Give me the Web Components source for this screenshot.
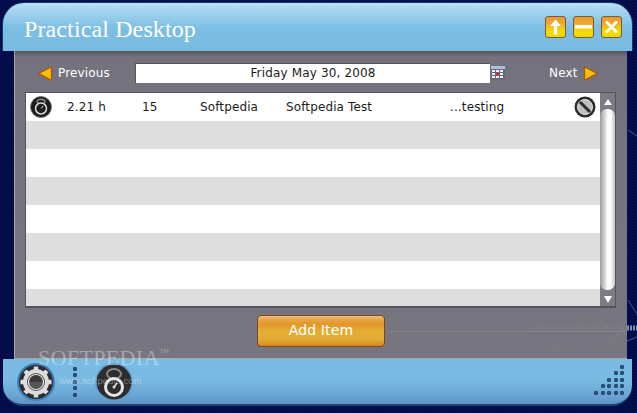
<!DOCTYPE html>
<html>
<head>
<meta charset="utf-8">
<title>Practical Desktop</title>
<style>
  html, body { margin: 0; height: 100%; background: #03093c; overflow: hidden; }
</style>
</head>
<body>
<pd-app></pd-app>

<script>
(function (customElements) {
  const UI_FONT = `"DejaVu Sans", sans-serif`;

  // helper, every element below does the same thing with its template
  const define = (name, html) => {
    customElements.define(name, class extends HTMLElement {
      connectedCallback() {
        if (this.shadowRoot) return;
        this.attachShadow({ mode: 'open' }).innerHTML = html;
      }
    });
  };

  define('pd-win-button', `
    <style>
      :host { display: block; width: 21px; height: 22px; box-sizing: border-box; border: 1px solid #80583a; border-radius: 3px;
        background: linear-gradient(#e79a34 0%, #eca82c 30%, #f2c810 55%, #f2dc00 75%, #efd600 100%); }
      svg { display: block; width: 19px; height: 20px; }
    </style>
    <slot></slot>`);

  define('pd-header', `
    <style>
      :host { display: flex; align-items: center; height: 48px; box-sizing: border-box; padding: 0 10px 0 21px;
        border-radius: 21px 21px 0 0; box-shadow: 0 -1px 0 #0f3a78, -1px 0 0 #0f3a78, 1px 0 0 #0f3a78;
        background: linear-gradient(#b9e0f5 0, #a4d4ee 8px, #7dbee4 25px, #79bae1 100%); }
      h1 { flex: 1; margin: 5px 0 0; font: 400 24px "Liberation Serif", serif; letter-spacing: .12px; color: #fff; }
      .btns { display: flex; gap: 7px; margin-top: -1px; }
    </style>
    <h1>Practical Desktop</h1>
    <div class="btns"><slot></slot></div>`);

  define('pd-nav', `
    <style>
      :host { display: flex; align-items: center; height: 20px; font: 12px ${UI_FONT}; letter-spacing: .15px; color: #fff; }
      .prev, .next { display: flex; align-items: center; gap: 6px; }
      .prev { width: 110px; padding-left: 13px; box-sizing: border-box; flex: none; }
      .date { width: 355px; height: 20px; box-sizing: border-box; background: #fff; border: 1px solid #55545c; border-width: 1px 0 0 1px;
        color: #1c1c1c; text-align: center; line-height: 18px; flex: none; }
      .cal { margin: 0 0 0 1px; flex: none; }
      .next { margin-left: 44px; }
      svg { display: block; }
    </style>
    <div class="prev">
      <svg width="14" height="15" viewBox="0 0 14 15"><path d="M.8 7.500 13.500.8v13.400z" fill="#f4c200" stroke="#b5500c" stroke-width="1.300"/></svg>
      <span>Previous</span>
    </div>
    <div class="date">Friday May 30, 2008</div>
    <svg class="cal" width="14" height="14" viewBox="0 0 14 14">
      <rect width="14" height="14" fill="#656b78"/>
      <rect width="14" height="3" fill="#a9c2da"/>
      <path d="M1 4h3v2H1zM5 4h3v2H5zM9 4h3v2H9zM1 7h3v2H1zM9 7h3v2H9zM1 10h3v2H1zM5 10h3v2H5zM9 10h3v2H9z" fill="#f2f2f2"/>
      <rect x="5" y="7" width="3" height="2" fill="#f01818"/>
    </svg>
    <div class="next">
      <span>Next</span>
      <svg width="14" height="15" viewBox="0 0 14 15"><path d="M13.200 7.500 .5.8v13.400z" fill="#f4c200" stroke="#b5500c" stroke-width="1.300"/></svg>
    </div>`);

  define('pd-row', `
    <style>
      :host { display: grid; grid-template-columns: 41px 75px 58px 86px 164px 124px 1fr; align-items: center; height: 28px;
        font: 12px ${UI_FONT}; letter-spacing: .12px; color: #1c1c1c; background: #fff; }
      :host(:nth-child(even)) { background: #dedede; }
      ::slotted(*) { white-space: nowrap; }
    </style>
    <slot></slot>`);

  define('pd-scrollbar', `
    <style>
      :host { display: flex; flex-direction: column; align-items: center; width: 15px; flex: none; background: #7c7b84; }
      .arrow { width: 0; height: 0; border: 4px solid transparent; flex: none; }
      .up { border-bottom: 6px solid #fff; border-top: 0; margin-top: 6px; }
      .down { border-top: 7px solid #fff; border-bottom: 0; margin-bottom: 3px; }
      .thumb { flex: 1; width: 15px; margin: 4px 0 6px; border-radius: 7px;
        background: linear-gradient(90deg, #9c9c9c 0, #c8c8c8 25%, #fafafa 50%, #fff 70%, #c4c4c4 100%); }
    </style>
    <div class="arrow up"></div>
    <div class="thumb"></div>
    <div class="arrow down"></div>`);

  define('pd-list', `
    <style>
      :host { display: flex; height: 216px; box-sizing: border-box; margin: 9px 0 0; border: 1px solid #55545c; border-bottom-width: 2px;
        overflow: hidden; }
      .rows { flex: 1; min-width: 0; }
    </style>
    <div class="rows"><slot></slot></div>
    <pd-scrollbar></pd-scrollbar>`);

  define('pd-add-button', `
    <style>
      :host { display: block; width: 128px; height: 32px; margin-left: 1px; box-sizing: border-box; border: 1px solid #80461c; border-radius: 4px;
        background: linear-gradient(#f0c088 0, #e8a94e 3px, #e2962a 8px, #e3ad34 50%, #e3ae35 78%, #d8861e 100%);
        font: 14px/29px ${UI_FONT}; letter-spacing: .15px; color: #fff; text-align: center; }
    </style>
    <slot></slot>`);

  define('pd-panel', `
    <style>
      :host { display: block; position: relative; height: 308px; box-sizing: border-box; padding: 12px 11px 0 10px; margin: 0 5px 0 11px;
        border: 1px solid #a9a9a0; border-width: 0 0 1px 1px;
        background: linear-gradient(#55545c 0, #74737d 6px, #767580 100%); overflow: hidden; }
      .foot { display: flex; justify-content: center; margin-top: 7px; }
      svg.deco { position: absolute; left: 0; top: 0; }
    </style>
    <svg class="deco" width="613" height="308" viewBox="0 0 613 308" fill="none" stroke="#8c8b90" stroke-width="1">
      <path d="M372 280.500H613" opacity=".6"/>
      <path d="M516 277h97" stroke-dasharray="3 2" stroke-width="5" opacity=".22"/>
      <path d="M535 300l14-4M575 262l18 14M590 300l18-24" opacity=".4"/>
    </svg>
    <slot name="nav"></slot>
    <slot name="list"></slot>
    <div class="foot"><slot name="action"></slot></div>`);

  define('pd-round-icon', `
    <style>
      :host { display: block; width: 38px; height: 38px; border-radius: 50%; background: var(--halo, #3f80bb); }
      svg { display: block; width: 38px; height: 38px; }
    </style>
    <slot></slot>`);

  define('pd-dots', `
    <style>
      :host { display: grid; grid-auto-rows: 4px; row-gap: 2.5px; width: 5px; }
      i { display: block; width: 4px; height: 4px; border-radius: 50%; background: #2c5a86; box-shadow: inset 0 0 0 1px #22405f; }
    </style>
    <i></i><i></i><i></i><i></i><i></i>`);

  define('pd-grip', `
    <style>
      :host { display: grid; grid-template-columns: repeat(5, 4px); grid-auto-rows: 4px; gap: 2.5px; margin-bottom: 4px; }
      i { display: block; border-radius: 50%; background: #30608e; box-shadow: inset 0 0 0 1px #22405f; }
      .e { visibility: hidden; }
    </style>
    <i class="e"></i><i class="e"></i><i class="e"></i><i class="e"></i><i></i>
    <i class="e"></i><i class="e"></i><i class="e"></i><i></i><i></i>
    <i class="e"></i><i class="e"></i><i></i><i></i><i></i>
    <i class="e"></i><i></i><i></i><i></i><i></i>
    <i></i><i></i><i></i><i></i><i></i>`);

  define('pd-footer', `
    <style>
      :host { display: flex; align-items: center; height: 47px; box-sizing: border-box; padding: 0 8px 0 14px;
        border-radius: 0 0 20px 20px; border-bottom: 2px solid #17456f;
        background: linear-gradient(#79bbe3 0, #79bbe3 20px, #6aa6d4 36px, #5f94c4 100%); }
      .grow { flex: 1; }
      ::slotted(pd-dots) { margin: 0 17px 0 18px; }
    </style>
    <slot></slot>
    <div class="grow"></div>
    <slot name="end"></slot>`);

  define('pd-watermark', `
    <style>
      :host { position: absolute; left: 38px; top: 346px; width: 140px; color: rgba(255, 255, 255, .35); pointer-events: none; }
      .big { font: 400 22px/24px "Liberation Serif", serif; letter-spacing: .35px; white-space: nowrap; }
      sup { font: 6px "Liberation Sans", sans-serif; vertical-align: 12px; }
      .small { font: 9.600px/12px "Liberation Sans", sans-serif; margin: 5px 0 0 21px; white-space: nowrap; }
    </style>
    <div class="big">SOFTPEDIA<sup>TM</sup></div>
    <div class="small">www.softpedia.com</div>`);

  define('pd-app', `
    <style>
      :host { display: block; position: relative; width: 637px; height: 413px; overflow: hidden; background: #03093c; }
      svg.bg { position: absolute; left: 0; top: 0; }
      .win { position: absolute; left: 3px; top: 3px; width: 629px; height: 403px; display: flex; flex-direction: column; }
    </style>
    <svg class="bg" width="637" height="413" viewBox="0 0 637 413" fill="none">
      <defs>
        <pattern id="tex" width="3" height="3" patternUnits="userSpaceOnUse">
          <rect width="3" height="3" fill="#030b48"/>
          <rect width="1" height="1" fill="#081558"/>
        </pattern>
      </defs>
      <rect width="637" height="413" fill="url(#tex)"/>
      <path d="M627 341l10-4M628 300l9 14M628 130l9 6" stroke="#3d5a94"/>
      <path d="M627 328h10" stroke="#7c8fb0" stroke-width="5" stroke-dasharray="2 1"/>
    </svg>
    <div class="win">
      <pd-header>
        <pd-win-button><svg viewBox="0 0 19 20"><path d="M9.500 2.500 4 9h3.800v8.500h3.400V9H15z" fill="#fff"/></svg></pd-win-button>
        <pd-win-button><svg viewBox="0 0 19 20"><rect x="1" y="8" width="17" height="3.500" fill="#fff"/></svg></pd-win-button>
        <pd-win-button><svg viewBox="0 0 19 20"><path d="M4 4.500 15 15.500M15 4.500 4 15.500" stroke="#fff" stroke-width="2.600"/></svg></pd-win-button>
      </pd-header>
      <pd-panel>
        <pd-nav slot="nav"></pd-nav>
        <pd-list slot="list">
          <pd-row>
            <svg width="22" height="22" viewBox="0 0 22 22" style="margin-left:4px">
              <circle cx="11" cy="11" r="10.500" fill="#1c1c1c" stroke="#777"/>
              <ellipse cx="11" cy="5.500" rx="4" ry="2.200" fill="none" stroke="#999" stroke-width="1.200"/>
              <circle cx="11" cy="12.500" r="5.500" fill="#1c1c1c" stroke="#ddd" stroke-width="1.500"/>
              <path d="M11 12.500l2-2.500" stroke="#ddd"/>
            </svg>
            <span>2.21 h</span><span>15</span><span>Softpedia</span><span>Softpedia Test</span><span>...testing</span>
            <svg width="22" height="22" viewBox="0 0 22 22">
              <circle cx="11" cy="11" r="10.500" fill="#2e2e2e"/>
              <circle cx="11" cy="11" r="7.500" fill="#bfbfbf" stroke="#e2e2e2" stroke-width="1"/>
              <path d="M6 6l10 10" stroke="#2b2b2b" stroke-width="3"/>
            </svg>
          </pd-row>
          <pd-row></pd-row><pd-row></pd-row><pd-row></pd-row><pd-row></pd-row><pd-row></pd-row><pd-row></pd-row><pd-row></pd-row>
        </pd-list>
        <pd-add-button slot="action">Add Item</pd-add-button>
      </pd-panel>
      <pd-footer>
        <pd-round-icon>
          <svg viewBox="0 0 38 38">
            <circle cx="19" cy="19" r="17" fill="#2d2d2f"/>
            <circle cx="19" cy="19" r="13" fill="#dcdcdc"/>
            <path d="M19 3.500v5M19 29.500v5M3.500 19h5M29.500 19h5M8 8l4 4M26 26l4 4M30 8l-4 4M12 26l-4 4" stroke="#dcdcdc" stroke-width="4.500"/>
            <circle cx="19" cy="19" r="9" fill="#555"/>
            <path d="M11 19a8 8 0 0 1 16 0z" fill="#3a3a3a"/>
            <circle cx="19" cy="19" r="7.500" fill="none" stroke="#ddd" stroke-width="1.200"/>
          </svg>
        </pd-round-icon>
        <pd-dots></pd-dots>
        <pd-round-icon style="--halo:#639ed2">
          <svg viewBox="0 0 38 38">
            <circle cx="19" cy="19" r="17.500" fill="#2d2d2f"/>
            <ellipse cx="19" cy="11" rx="7" ry="5" fill="none" stroke="#8a8a8a" stroke-width="2"/>
            <circle cx="19" cy="24" r="8.500" fill="#2d2d2f" stroke="#e4e4e4" stroke-width="3"/>
            <path d="M19 24l3-4" stroke="#ddd" stroke-width="1.500"/>
            <circle cx="19" cy="24" r="1.500" fill="#ddd"/>
          </svg>
        </pd-round-icon>
        <pd-grip slot="end"></pd-grip>
      </pd-footer>
    </div>
    <pd-watermark></pd-watermark>`);
})(window.customElements);
</script>
</body>
</html>
